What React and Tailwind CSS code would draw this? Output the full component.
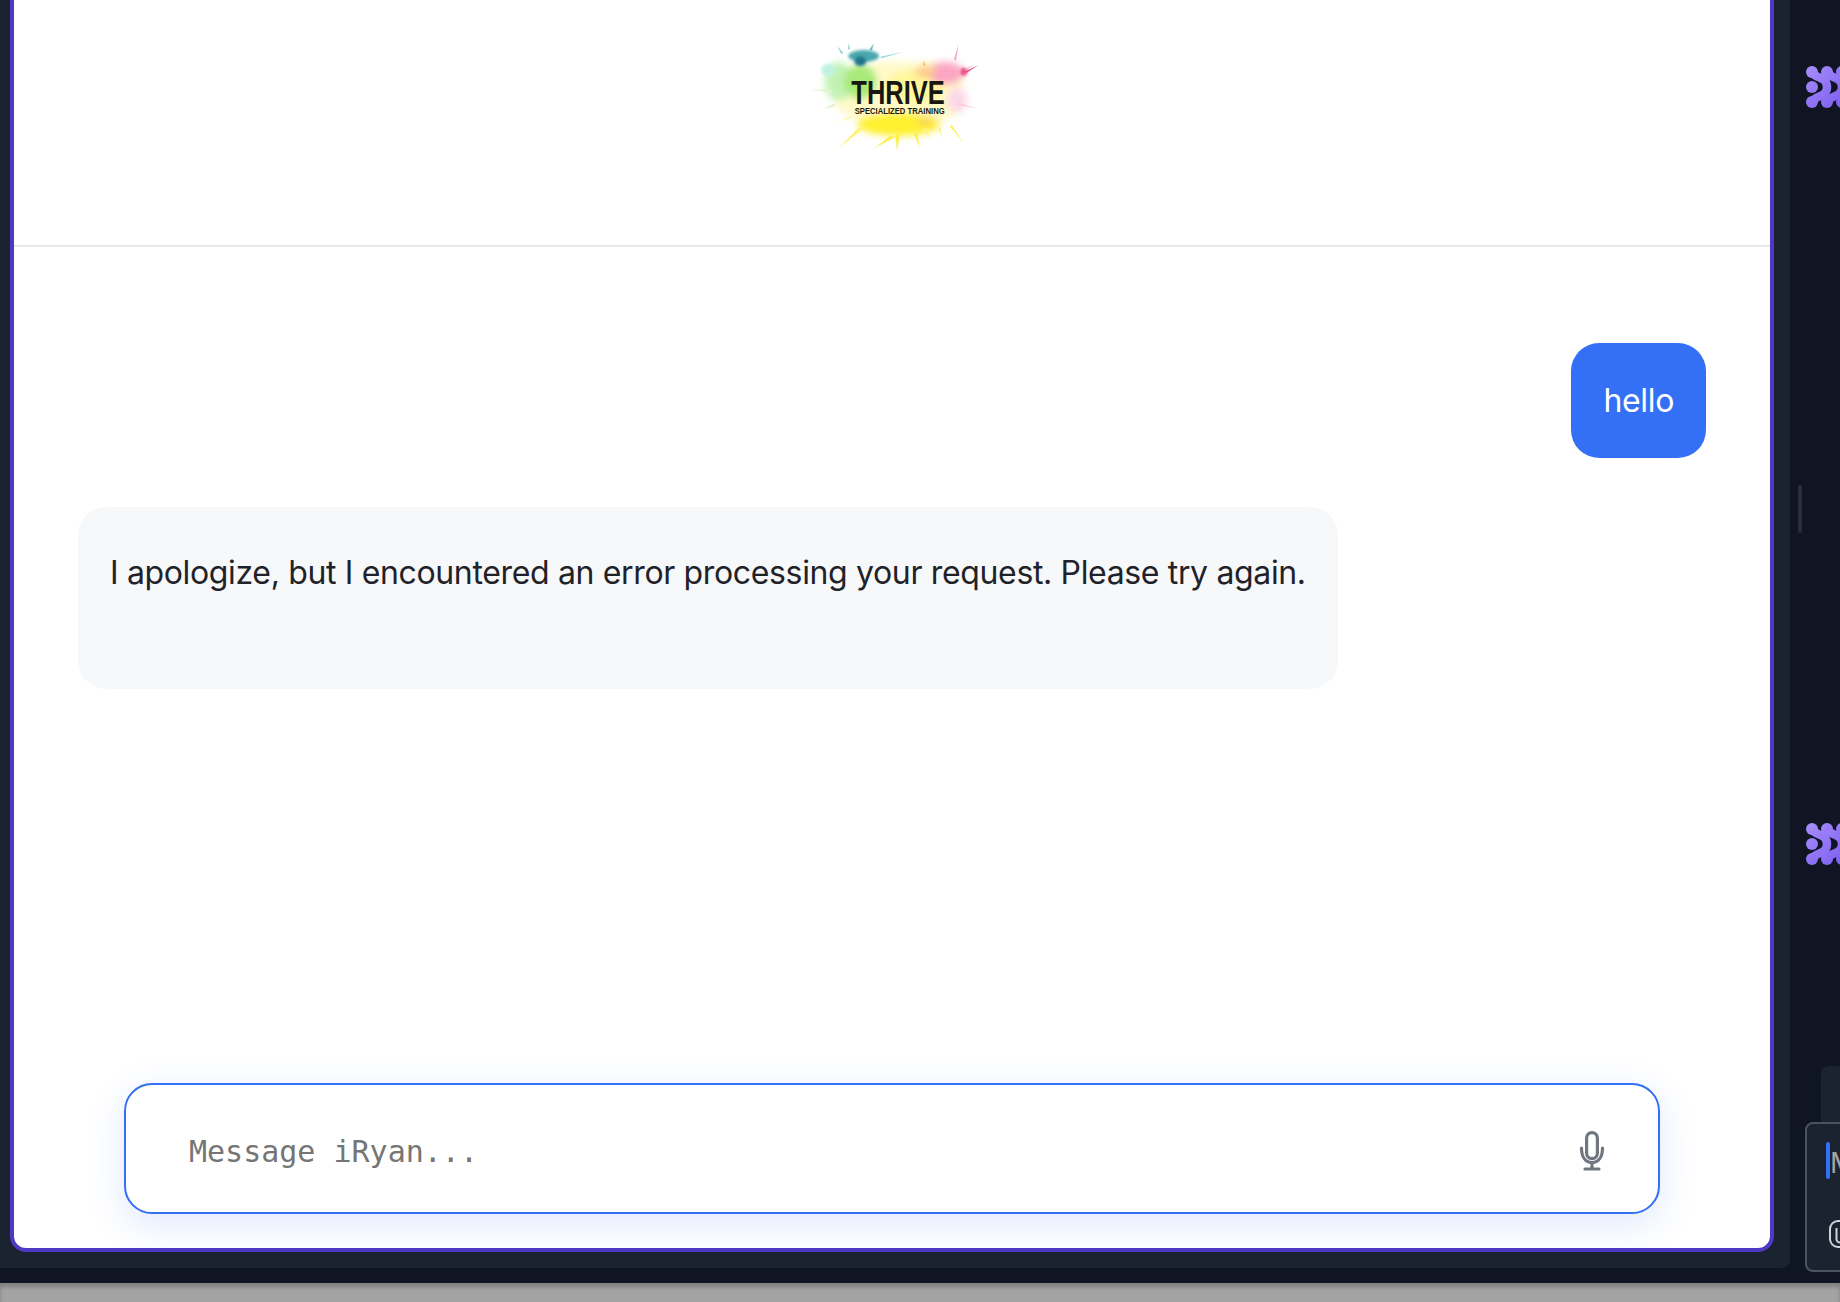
import React from "react";

function NodeIcon({ id }) {
  return (
    <svg width="34" height="44" viewBox="0 0 34 44" className="block shrink-0">
      <defs>
        <linearGradient id={id} gradientUnits="userSpaceOnUse" x1="0" y1="0" x2="40" y2="44">
          <stop offset="0" stopColor="#a98ffb" />
          <stop offset="1" stopColor="#7a5af0" />
        </linearGradient>
      </defs>
      <g fill={`url(#${id})`}>
        <circle cx="6" cy="7" r="6" />
        <circle cx="21" cy="7" r="6" />
        <circle cx="36" cy="7" r="6" />
        <circle cx="6" cy="22" r="6" />
        <circle cx="6" cy="37" r="6" />
        <circle cx="21" cy="37" r="6" />
        <circle cx="36" cy="37" r="6" />
      </g>
      <g fill="none" stroke={`url(#${id})`} strokeWidth="8.5">
        <path d="M6 7C9 14 21 11 21 22C21 33 9 30 6 37" />
        <path d="M21 7C24 14 36 11 36 22C36 33 24 30 21 37" />
      </g>
    </svg>
  );
}

function MicIcon() {
  return (
    <svg width="30" height="42" viewBox="0 0 30 42" className="mt-1 block shrink-0" fill="none" stroke="#6f767e" strokeWidth="3.2" strokeLinecap="round">
      <rect x="9.6" y="2.6" width="10.8" height="26" rx="5.4" />
      <path d="M4.5 18C4.5 27 8.5 32.5 15 32.5S25.5 27 25.5 18" />
      <path d="M15 33v6M8 39h14" />
    </svg>
  );
}

function ClipIcon() {
  return (
    <svg width="11" height="28" viewBox="0 0 11 28" className="block" fill="none" stroke="#cfd3d9" strokeWidth="2">
      <path d="M11 1H9a8 8 0 0 0-8 8v10a8 8 0 0 0 8 8h2" />
      <path d="M7.5 8v11a3.5 3.5 0 0 0 3.5 3.5" />
    </svg>
  );
}

function Logo() {
  return (
    <svg width="220" height="150" viewBox="0 0 660 450" className="block">
      <defs>
        <filter id="soft" x="-30%" y="-30%" width="160%" height="160%">
          <feGaussianBlur stdDeviation="11" />
        </filter>
        <filter id="soft2" x="-30%" y="-30%" width="160%" height="160%">
          <feGaussianBlur stdDeviation="5" />
        </filter>
        <filter id="soft3" x="-10%" y="-10%" width="120%" height="120%">
          <feGaussianBlur stdDeviation="0.8" />
        </filter>
      </defs>
      <g filter="url(#soft)">
        <path d="M150 150L300 125L500 125L545 180L530 280L430 330L300 345L220 300L160 260Z" fill="#fffac8" />
        <ellipse cx="350" cy="312" rx="125" ry="36" fill="#fff12f" />
        <ellipse cx="400" cy="200" rx="90" ry="50" fill="#fff799" />
        <ellipse cx="170" cy="185" rx="42" ry="58" fill="#c2f2b4" />
        <ellipse cx="235" cy="185" rx="50" ry="52" fill="#a8ea78" />
        <ellipse cx="490" cy="160" rx="55" ry="34" fill="#fba6c2" />
        <ellipse cx="525" cy="240" rx="30" ry="38" fill="#fdd8e8" />
        <ellipse cx="430" cy="155" rx="32" ry="18" fill="#fdc98c" />
        <ellipse cx="430" cy="305" rx="28" ry="12" fill="#fbd25a" />
      </g>
      <g filter="url(#soft2)">
        <ellipse cx="245" cy="108" rx="46" ry="18" fill="#4aa9ad" />
        <ellipse cx="235" cy="124" rx="18" ry="15" fill="#22768a" />
        <ellipse cx="545" cy="155" rx="10" ry="12" fill="#e84a80" />
        <ellipse cx="140" cy="150" rx="22" ry="18" fill="#bdf3e0" />
      </g>
      <g filter="url(#soft3)">
        <polygon points="295,110 365,95 300,115" fill="#9bd8e3" />
        <polygon points="178,102 165,78 184,98" fill="#8ccfcf" />
        <polygon points="198,88 200,70 204,88" fill="#8ccfcf" />
        <polygon points="262,90 275,70 270,92" fill="#6dbcc1" />
        <polygon points="150,208 82,210 150,216" fill="#dcf8ca" />
        <polygon points="155,252 124,267 158,258" fill="#cff5b8" />
        <polygon points="516,118 530,72 522,122" fill="#f9a5c5" />
        <polygon points="552,153 590,135 552,160" fill="#e84a80" />
        <polygon points="552,148 578,131 550,153" fill="#f08ab0" />
        <polygon points="530,248 586,266 528,254" fill="#fbc8e0" />
        <polygon points="232,320 170,385 244,326" fill="#fff27a" />
        <polygon points="212,286 164,305 214,293" fill="#fff8b5" />
        <polygon points="325,347 277,385 338,352" fill="#fff04a" />
        <polygon points="340,342 345,393 354,342" fill="#fff04a" />
        <polygon points="396,340 412,383 406,336" fill="#fff04a" />
        <polygon points="422,325 445,356 430,322" fill="#fff27a" />
        <polygon points="468,322 481,356 474,320" fill="#fff27a" />
        <polygon points="502,318 546,371 510,314" fill="#fff27a" />
        <polygon points="423,135 426,122 431,138" fill="#fbb46b" />
      </g>
      <text x="208" y="253" textLength="280" lengthAdjust="spacingAndGlyphs" fontFamily="'Liberation Sans', sans-serif" fontWeight="700" fontSize="102" fill="#191712">THRIVE</text>
      <text x="218" y="283" textLength="270" lengthAdjust="spacingAndGlyphs" fontFamily="'Liberation Sans', sans-serif" fontWeight="700" fontSize="29" fill="#191712">SPECIALIZED TRAINING</text>
    </svg>
  );
}

export default function App() {
  return (
    <div className="flex h-[1302px] w-full flex-col overflow-hidden bg-[#a3a3a3] font-['Inter',sans-serif]">
      <div className="flex h-[1283px] shrink-0 bg-[#0f1523]">
        <div className="h-[1268px] w-[1790px] shrink-0 rounded-br-lg bg-[#1b2230] pb-4 pl-[10px] pr-4">
          <div className="flex h-[1252px] flex-col overflow-hidden rounded-b-2xl border-x-4 border-b-4 border-[#4f39c4] bg-white">
            <div className="flex h-[247px] shrink-0 justify-center border-b-2 border-[#e5e7eb] pt-5">
              <Logo />
            </div>
            <div className="flex flex-1 flex-col px-16 pt-[96px]">
              <div className="flex justify-end">
                <div className="flex h-[115px] items-center rounded-[28px] bg-[#3370f6] px-8 pt-px text-[32px] tracking-[-0.35px] text-white">hello</div>
              </div>
              <div className="mt-[49px] flex justify-start">
                <div className="h-[182px] rounded-[28px] bg-[#f7f8fa] px-8 pt-[46px] text-[32px] leading-[40px] tracking-[-0.35px] whitespace-nowrap text-[#1f2329]">
                  I apologize, but I encountered an error processing your request. Please try again.
                </div>
              </div>
            </div>
            <div className="px-[110px] pb-[34px]">
              <div className="flex h-[131px] items-center justify-between rounded-[28px] border-2 border-[#3370f6] bg-white pl-[63px] pr-[51px] shadow-[0_10px_36px_rgba(51,112,246,0.16)]">
                <span className="pt-[5px] font-['DejaVu_Sans_Mono',monospace] text-[30px] text-[#757575]">Message iRyan...</span>
                <MicIcon />
              </div>
            </div>
          </div>
        </div>
        <div className="relative flex flex-1 flex-col overflow-hidden pl-4 pt-[65px]">
          <div className="absolute left-2 top-[485px] h-12 w-1 rounded-full bg-[#272d3b]" />
          <NodeIcon id="nodeA" />
          <div className="mt-[713px]">
            <NodeIcon id="nodeB" />
          </div>
          <div className="mt-[200px] ml-[15px] h-[70px] shrink-0 rounded-tl-lg bg-[#1b2230]" />
          <div className="absolute left-[15px] top-[1122px] h-[150px] w-[60px] rounded-lg border-2 border-[#4b5263] bg-[#1b2230]">
            <div className="mt-[18px] ml-[19px] flex h-[37px] items-center">
              <div className="h-[37px] w-1 shrink-0 rounded-sm bg-[#3370f6]" />
              <span className="pt-1 text-[28px] text-[#a3a3a3]">M</span>
            </div>
            <div className="mt-[41px] ml-[22px]">
              <ClipIcon />
            </div>
          </div>
        </div>
      </div>
      <div className="flex-1 shadow-[inset_0_4px_4px_rgba(0,0,0,0.22)]" />
    </div>
  );
}
